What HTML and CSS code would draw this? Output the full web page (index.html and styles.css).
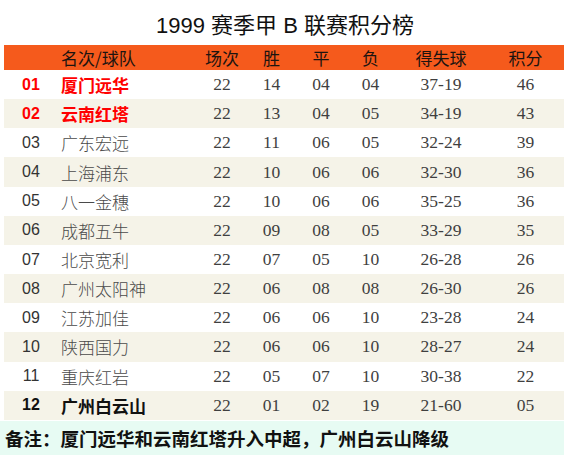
FILE: index.html
```html
<!DOCTYPE html>
<html lang="zh-CN">
<head>
<meta charset="utf-8">
<title>1999 赛季甲 B 联赛积分榜</title>
<link rel="stylesheet" href="styles.css">
</head>
<body>
<div class="page">
  <h1 class="title">1999 赛季甲 B 联赛积分榜</h1>
  <div class="table">
    <div class="row head">
      <div class="c-rank"></div>
      <div class="c-name">名次/球队</div>
      <div class="c-num">场次</div>
      <div class="c-num">胜</div>
      <div class="c-num">平</div>
      <div class="c-num">负</div>
      <div class="c-num">得失球</div>
      <div class="c-num">积分</div>
    </div>
    <div class="row promo">
      <div class="c-rank">01</div><div class="c-name">厦门远华</div>
      <div class="c-num">22</div><div class="c-num">14</div><div class="c-num">04</div><div class="c-num">04</div><div class="c-num">37-19</div><div class="c-num">46</div>
    </div>
    <div class="row alt promo">
      <div class="c-rank">02</div><div class="c-name">云南红塔</div>
      <div class="c-num">22</div><div class="c-num">13</div><div class="c-num">04</div><div class="c-num">05</div><div class="c-num">34-19</div><div class="c-num">43</div>
    </div>
    <div class="row">
      <div class="c-rank">03</div><div class="c-name">广东宏远</div>
      <div class="c-num">22</div><div class="c-num">11</div><div class="c-num">06</div><div class="c-num">05</div><div class="c-num">32-24</div><div class="c-num">39</div>
    </div>
    <div class="row alt">
      <div class="c-rank">04</div><div class="c-name">上海浦东</div>
      <div class="c-num">22</div><div class="c-num">10</div><div class="c-num">06</div><div class="c-num">06</div><div class="c-num">32-30</div><div class="c-num">36</div>
    </div>
    <div class="row">
      <div class="c-rank">05</div><div class="c-name">八一金穗</div>
      <div class="c-num">22</div><div class="c-num">10</div><div class="c-num">06</div><div class="c-num">06</div><div class="c-num">35-25</div><div class="c-num">36</div>
    </div>
    <div class="row alt">
      <div class="c-rank">06</div><div class="c-name">成都五牛</div>
      <div class="c-num">22</div><div class="c-num">09</div><div class="c-num">08</div><div class="c-num">05</div><div class="c-num">33-29</div><div class="c-num">35</div>
    </div>
    <div class="row">
      <div class="c-rank">07</div><div class="c-name">北京宽利</div>
      <div class="c-num">22</div><div class="c-num">07</div><div class="c-num">05</div><div class="c-num">10</div><div class="c-num">26-28</div><div class="c-num">26</div>
    </div>
    <div class="row alt">
      <div class="c-rank">08</div><div class="c-name">广州太阳神</div>
      <div class="c-num">22</div><div class="c-num">06</div><div class="c-num">08</div><div class="c-num">08</div><div class="c-num">26-30</div><div class="c-num">26</div>
    </div>
    <div class="row">
      <div class="c-rank">09</div><div class="c-name">江苏加佳</div>
      <div class="c-num">22</div><div class="c-num">06</div><div class="c-num">06</div><div class="c-num">10</div><div class="c-num">23-28</div><div class="c-num">24</div>
    </div>
    <div class="row alt">
      <div class="c-rank">10</div><div class="c-name">陕西国力</div>
      <div class="c-num">22</div><div class="c-num">06</div><div class="c-num">06</div><div class="c-num">10</div><div class="c-num">28-27</div><div class="c-num">24</div>
    </div>
    <div class="row">
      <div class="c-rank">11</div><div class="c-name">重庆红岩</div>
      <div class="c-num">22</div><div class="c-num">05</div><div class="c-num">07</div><div class="c-num">10</div><div class="c-num">30-38</div><div class="c-num">22</div>
    </div>
    <div class="row alt releg">
      <div class="c-rank">12</div><div class="c-name">广州白云山</div>
      <div class="c-num">22</div><div class="c-num">01</div><div class="c-num">02</div><div class="c-num">19</div><div class="c-num">21-60</div><div class="c-num">05</div>
    </div>
  </div>
  <div class="note">备注：厦门远华和云南红塔升入中超，广州白云山降级</div>
</div>
</body>
</html>
```

FILE: styles.css
```css
html, body {
  margin: 0;
  padding: 0;
  background: #ffffff;
}

.page {
  width: 564px;
  font-family: "Noto Sans CJK SC", sans-serif;
}

.title {
  margin: 0;
  height: 45px;
  display: flex;
  align-items: center;
  justify-content: center;
  padding-left: 6px;
  box-sizing: border-box;
  font-family: "Liberation Sans", "Noto Sans CJK SC", sans-serif;
  font-size: 22px;
  font-weight: 400;
  color: #111111;
}

.table {
  margin-left: 4px;
  width: 560px;
}

.row {
  display: grid;
  grid-template-columns: 56px 137px 50px 49px 50px 49px 92px 77px;
  height: 29.17px;
  align-items: center;
  background: #ffffff;
}

.row.alt {
  background: #f5f3e8;
}

.row.head {
  height: 25px;
  background: #f55a1c;
}

.row.head .c-name,
.row.head .c-num {
  font-family: "Noto Sans CJK SC", sans-serif;
  font-size: 17px;
  font-weight: 400;
  color: #1c1410;
}

.c-rank {
  text-align: center;
  font-family: "Liberation Sans", sans-serif;
  font-size: 16px;
  color: #333333;
  padding-right: 2px;
}

.c-name {
  padding-left: 1px;
  font-family: "Noto Sans CJK SC", sans-serif;
  font-size: 17px;
  font-weight: 300;
  color: #4a4a4a;
  white-space: nowrap;
}

.c-num {
  text-align: center;
  font-family: "Liberation Serif", serif;
  font-size: 17.5px;
  color: #3f3f3f;
}

.promo .c-rank,
.promo .c-name {
  color: #ff0000;
  font-weight: 700;
}

.releg .c-rank,
.releg .c-name {
  color: #111111;
  font-weight: 700;
}

.note {
  height: 34px;
  margin-top: 1px;
  display: flex;
  align-items: center;
  padding-left: 5px;
  background: #e7fbf3;
  font-family: "Noto Sans CJK SC", sans-serif;
  font-size: 18.5px;
  font-weight: 700;
  color: #111111;
  white-space: nowrap;
}
```
